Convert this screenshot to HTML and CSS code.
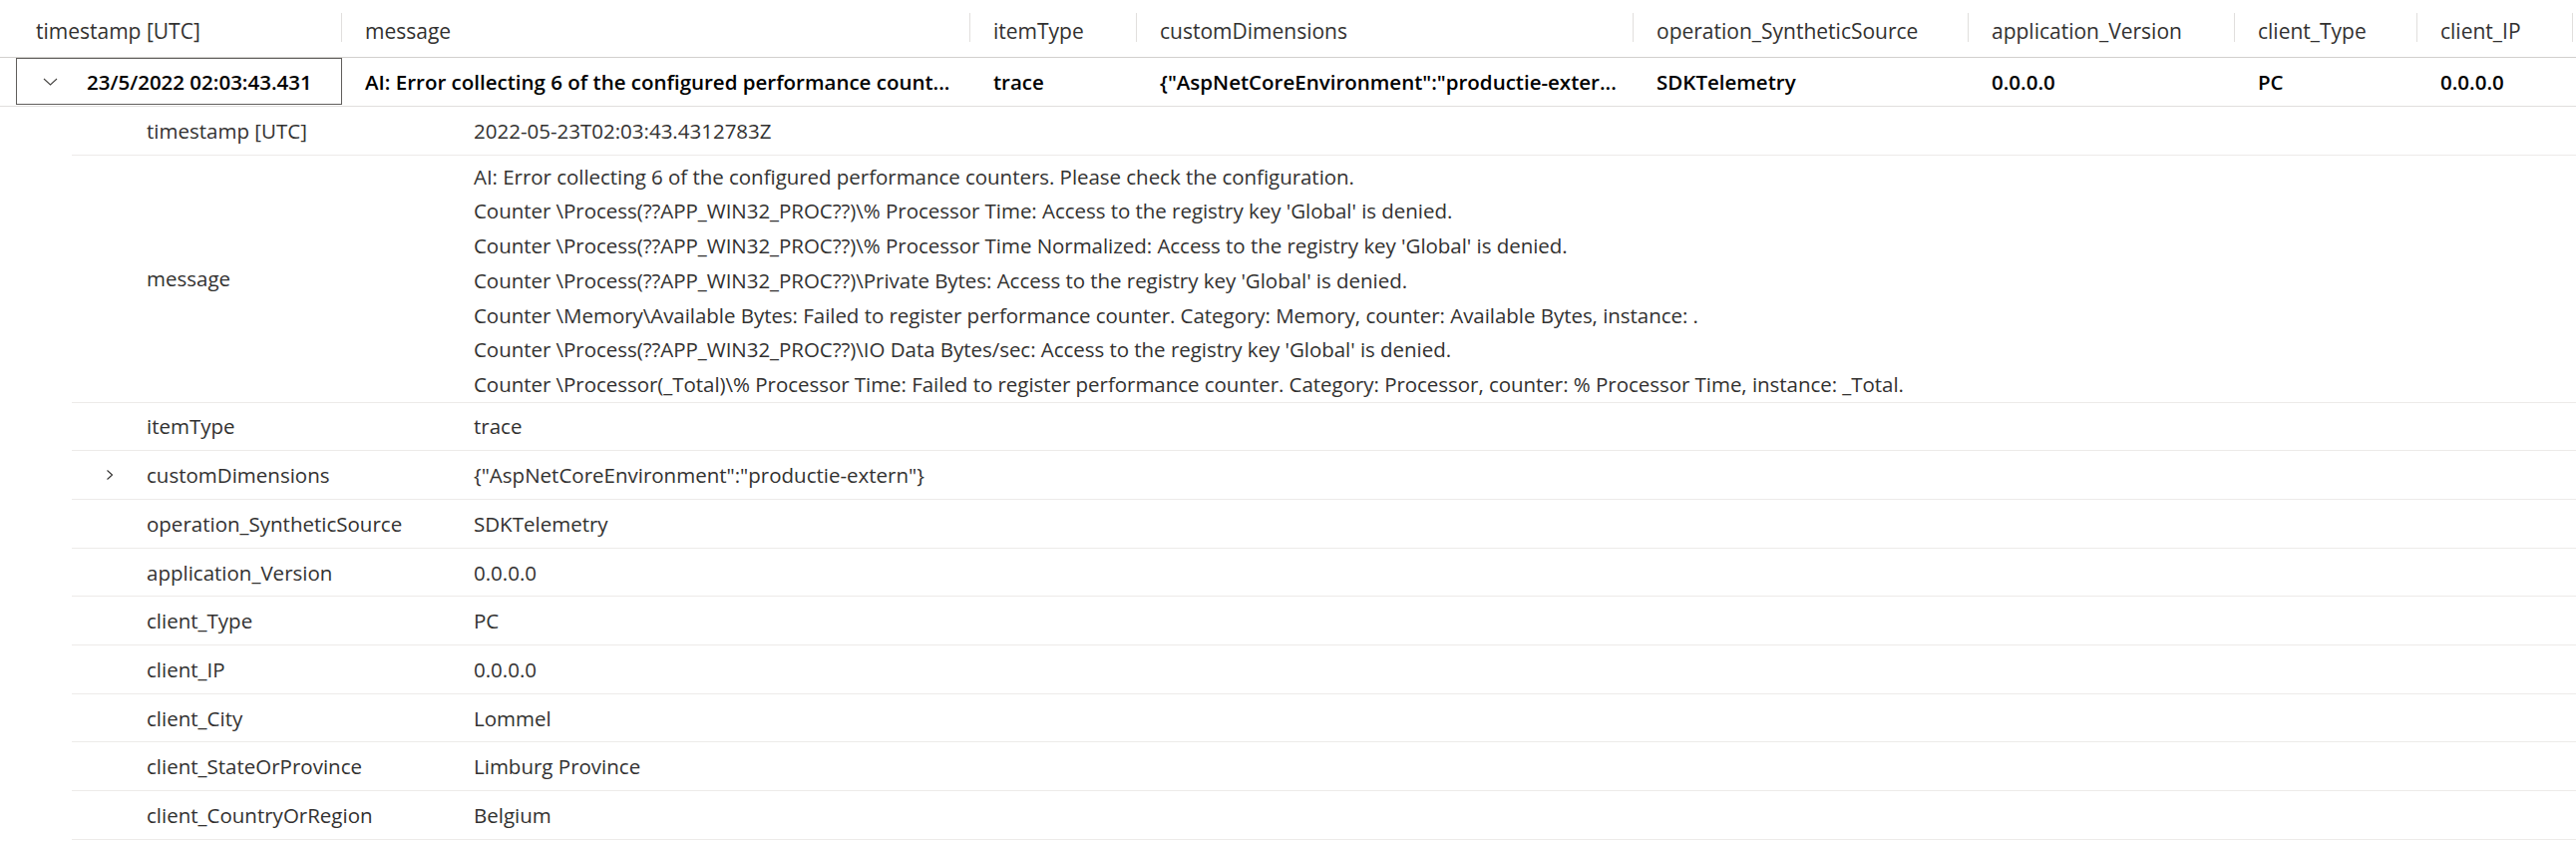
FILE: index.html
```html
<!DOCTYPE html>
<html>
<head>
<meta charset="utf-8">
<link rel="stylesheet" href="styles.css">
</head>
<body>
<div class="table">
  <div class="hdr">
    <div class="hc c1">timestamp [UTC]</div>
    <div class="hc c2">message</div>
    <div class="hc c3">itemType</div>
    <div class="hc c4">customDimensions</div>
    <div class="hc c5">operation_SyntheticSource</div>
    <div class="hc c6">application_Version</div>
    <div class="hc c7">client_Type</div>
    <div class="hc c8">client_IP</div>
  </div>
  <div class="row1">
    <div class="rc c1 first">
      <div class="focus">
        <svg class="chev-down" viewBox="0 0 15 8" width="15" height="8"><path d="M1 1 L7.5 7 L14 1" fill="none" stroke="#484644" stroke-width="1.1"/></svg>
        <span>23/5/2022 02:03:43.431</span>
      </div>
    </div>
    <div class="rc c2">AI: Error collecting 6 of the configured performance count...</div>
    <div class="rc c3">trace</div>
    <div class="rc c4">{"AspNetCoreEnvironment":"productie-exter...</div>
    <div class="rc c5">SDKTelemetry</div>
    <div class="rc c6">0.0.0.0</div>
    <div class="rc c7">PC</div>
    <div class="rc c8">0.0.0.0</div>
  </div>
  <div class="details">
    <div class="drow"><div class="dexp"></div><div class="dlabel">timestamp [UTC]</div><div class="dval">2022-05-23T02:03:43.4312783Z</div></div>
    <div class="drow"><div class="dexp"></div><div class="dlabel">message</div><div class="dval multi">
      <div>AI: Error collecting 6 of the configured performance counters. Please check the configuration.</div>
      <div>Counter \Process(??APP_WIN32_PROC??)\% Processor Time: Access to the registry key 'Global' is denied.</div>
      <div>Counter \Process(??APP_WIN32_PROC??)\% Processor Time Normalized: Access to the registry key 'Global' is denied.</div>
      <div>Counter \Process(??APP_WIN32_PROC??)\Private Bytes: Access to the registry key 'Global' is denied.</div>
      <div>Counter \Memory\Available Bytes: Failed to register performance counter. Category: Memory, counter: Available Bytes, instance: .</div>
      <div>Counter \Process(??APP_WIN32_PROC??)\IO Data Bytes/sec: Access to the registry key 'Global' is denied.</div>
      <div>Counter \Processor(_Total)\% Processor Time: Failed to register performance counter. Category: Processor, counter: % Processor Time, instance: _Total.</div>
    </div></div>
    <div class="drow"><div class="dexp"></div><div class="dlabel">itemType</div><div class="dval">trace</div></div>
    <div class="drow"><div class="dexp"><svg class="chev-right" viewBox="0 0 8 12" width="8" height="12"><path d="M1.5 1.5 L6.5 6 L1.5 10.5" fill="none" stroke="#323130" stroke-width="1.1"/></svg></div><div class="dlabel">customDimensions</div><div class="dval">{"AspNetCoreEnvironment":"productie-extern"}</div></div>
    <div class="drow"><div class="dexp"></div><div class="dlabel">operation_SyntheticSource</div><div class="dval">SDKTelemetry</div></div>
    <div class="drow"><div class="dexp"></div><div class="dlabel">application_Version</div><div class="dval">0.0.0.0</div></div>
    <div class="drow"><div class="dexp"></div><div class="dlabel">client_Type</div><div class="dval">PC</div></div>
    <div class="drow"><div class="dexp"></div><div class="dlabel">client_IP</div><div class="dval">0.0.0.0</div></div>
    <div class="drow"><div class="dexp"></div><div class="dlabel">client_City</div><div class="dval">Lommel</div></div>
    <div class="drow"><div class="dexp"></div><div class="dlabel">client_StateOrProvince</div><div class="dval">Limburg Province</div></div>
    <div class="drow"><div class="dexp"></div><div class="dlabel">client_CountryOrRegion</div><div class="dval">Belgium</div></div>
  </div>
</div>
</body>
</html>
```

FILE: styles.css
```css
html, body {
  margin: 0;
  padding: 0;
  background: #ffffff;
}
body {
  font-family: "Segoe UI", "Open Sans", "Noto Sans", sans-serif;
  font-size: 20.5px;
  color: #323130;
}
.table {
  width: 2583px;
}
.hdr {
  display: flex;
  height: 57px;
  border-bottom: 1px solid #d2d0ce;
}
.hc {
  position: relative;
  display: flex;
  align-items: center;
  padding-left: 23px;
  padding-top: 4px;
  box-sizing: border-box;
  white-space: nowrap;
  font-size: 21px;
  color: #323130;
}
.hc::after {
  content: "";
  position: absolute;
  right: 0;
  top: 13px;
  height: 29px;
  width: 1px;
  background: #e1dfdd;
}
.hc.c1 { padding-left: 36px; }
.c1 { width: 343px; flex: none; }
.c2 { width: 630px; flex: none; }
.c3 { width: 167px; flex: none; }
.c4 { width: 498px; flex: none; }
.c5 { width: 336px; flex: none; }
.c6 { width: 267px; flex: none; }
.c7 { width: 183px; flex: none; }
.c8 { width: 156px; flex: none; }

.row1 {
  display: flex;
  height: 48px;
  border-bottom: 1px solid #e1dfdd;
}
.rc {
  display: flex;
  align-items: center;
  padding-left: 23px;
  box-sizing: border-box;
  white-space: nowrap;
  overflow: hidden;
  color: #000000;
  font-weight: 600;
}
.rc.first {
  padding-left: 16px;
  overflow: visible;
}
.focus {
  width: 328px;
  height: 47px;
  box-sizing: border-box;
  border: 1px solid #605e5c;
  display: flex;
  align-items: center;
  margin-bottom: 1px;
}
.chev-down {
  margin-left: 26px;
  margin-right: 29px;
  flex: none;
}

.details {
  margin-left: 72px;
}
.drow {
  display: grid;
  grid-template-columns: 75px 328px 1fr;
  align-items: center;
  min-height: 47.7px;
  border-bottom: 1px solid #edebe9;
}
.dexp {
  display: flex;
  align-items: center;
  padding-left: 34px;
}
.dlabel, .dval {
  white-space: nowrap;
  color: #323130;
}
.dval.multi {
  line-height: 34.7px;
  padding: 4px 0 0 0;
  letter-spacing: -0.04px;
}
```
